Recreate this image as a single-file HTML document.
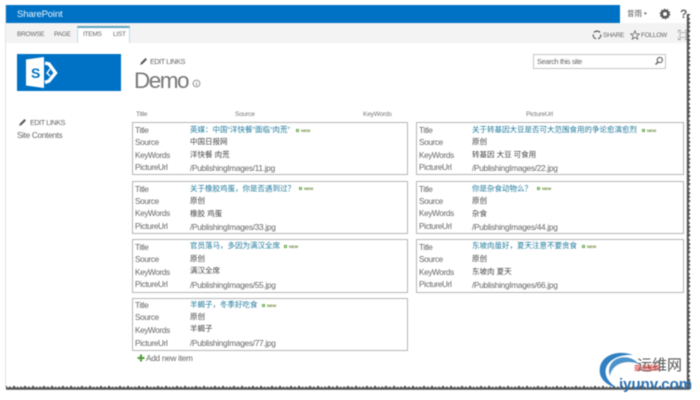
<!DOCTYPE html>
<html><head><meta charset="utf-8">
<style>
html,body{margin:0;padding:0;background:#fff;}
#p{position:relative;width:700px;height:400px;overflow:hidden;background:#fff;font-family:"Liberation Sans","Noto Sans CJK SC",sans-serif;color:#555;filter:blur(.4px);}
.a{position:absolute;white-space:nowrap;}
.c{position:absolute;border:1px solid #b5b5b5;box-sizing:border-box;background:#fff;}
.t{position:absolute;font-size:8.3px;letter-spacing:-.3px;line-height:12px;white-space:nowrap;color:#666;}
.r{font-size:8.2px;letter-spacing:-.35px;}
.v{color:#444;font-size:7.5px;letter-spacing:0;}
.l{color:#1f7a9c;font-size:7.5px;letter-spacing:0;}
.n{position:absolute;width:3px;height:3px;border:1px solid #6aa84f;box-sizing:border-box;}
.m{position:absolute;font-size:4px;line-height:5px;font-weight:bold;color:#6a8a3a;}
.h{position:absolute;font-size:6.6px;letter-spacing:-.2px;color:#777;top:109px;line-height:12px;}
.b{font-size:6.5px;letter-spacing:-.25px;line-height:9px;color:#666;top:30px;}
.e{font-size:7.2px;letter-spacing:-.4px;line-height:10px;color:#666;}
</style></head><body>
<div id="p">
<div class="a" style="left:6px;top:5px;width:614px;height:18px;background:#0072c6;"></div>
<div class="a" style="left:17px;top:8px;font-size:9.6px;letter-spacing:-.2px;line-height:13px;color:#e8f2fa;">SharePoint</div>
<div class="a" style="left:6px;top:23px;width:683px;height:20px;background:#f3f3f3;"></div>
<div class="a" style="left:77px;top:26px;width:53px;height:17px;background:#fff;border:1px solid #c4dbe4;border-top:2px solid #5fa4bd;border-bottom:0;box-sizing:border-box;"></div>
<div class="a b" style="left:17px;">BROWSE</div>
<div class="a b" style="left:54px;">PAGE</div>
<div class="a b" style="left:83px;">ITEMS</div>
<div class="a b" style="left:113px;">LIST</div>

<div class="a" style="left:627px;top:8px;font-size:7.5px;line-height:11px;color:#555;">昔雨 <span style="font-size:5px;vertical-align:1px;">▾</span></div>
<svg class="a" style="left:659px;top:8px;" width="12" height="12" viewBox="0 0 12 12"><circle cx="6" cy="6" r="3.2" fill="none" stroke="#555" stroke-width="2.4"/><circle cx="6" cy="6" r="4.6" fill="none" stroke="#555" stroke-width="1.4" stroke-dasharray="1.6 1.3"/></svg>
<div class="a" style="left:680px;top:7px;font-size:12px;line-height:14px;font-weight:bold;color:#666;">?</div>

<svg class="a" style="left:592px;top:30px;" width="10" height="10" viewBox="0 0 10 10"><path d="M2 2.5A4 4 0 0 1 8 2.5M8.8 4.5A4 4 0 0 1 6 8.8M4 8.8A4 4 0 0 1 1.2 4.5" fill="none" stroke="#555" stroke-width="1.2"/></svg>
<div class="a b" style="left:603px;top:31px;">SHARE</div>
<svg class="a" style="left:630px;top:30px;" width="10" height="10" viewBox="0 0 10 10"><path d="M5 .8L6.2 3.8 9.4 4 6.9 6 7.8 9.2 5 7.4 2.2 9.2 3.1 6 .6 4 3.8 3.8Z" fill="none" stroke="#666" stroke-width=".8"/></svg>
<div class="a b" style="left:641px;top:31px;">FOLLOW</div>
<svg class="a" style="left:678px;top:30px;" width="10" height="10" viewBox="0 0 10 10"><path d="M0 3V.5H3M7 .5H10V3M10 7V9.5H7M3 9.5H0V7" fill="none" stroke="#777" stroke-width=".8"/><rect x="2" y="2.5" width="6" height="5" fill="none" stroke="#999" stroke-width=".7"/></svg>

<div class="a" style="left:17px;top:54px;width:104px;height:37px;background:#0072c6;"></div>
<svg class="a" style="left:17px;top:54px;" width="104" height="37" viewBox="0 0 104 37">
<path d="M9 5.5L27 3V34L9 31.5Z" fill="#fff"/>
<text x="14" y="24" font-family="Liberation Sans" font-size="14" font-weight="bold" fill="#0072c6">S</text>
<path d="M28 9L32 10 38.5 19 32 27 28 28.5" fill="none" stroke="#fff" stroke-width="3.4"/>
<path d="M33 15L30 19 33 22" fill="none" stroke="#fff" stroke-width="1.4"/>
</svg>

<svg class="a" style="left:139px;top:57px;" width="9" height="9" viewBox="0 0 9 9"><path d="M1 8L2 5.5 6.5 1 8 2.5 3.5 7Z" fill="#555"/></svg>
<div class="a e" style="left:150px;top:57px;">EDIT LINKS</div>
<div class="a" style="left:134px;top:68px;font-size:22.5px;line-height:26px;color:#777;letter-spacing:-1.5px;font-weight:normal;">Demo</div>
<svg class="a" style="left:192px;top:79px;" width="9" height="9" viewBox="0 0 9 9"><circle cx="4.5" cy="4.5" r="3.4" fill="none" stroke="#777" stroke-width=".8"/><path d="M4.5 3V3.8M4.5 4.4V6.4" stroke="#777" stroke-width=".9"/></svg>

<div class="a" style="left:533px;top:54px;width:133px;height:15px;border:1px solid #c6c6c6;box-sizing:border-box;background:#fff;"></div>
<div class="a" style="left:537px;top:56px;font-size:7.4px;letter-spacing:-.35px;line-height:11px;color:#666;">Search this site</div>
<svg class="a" style="left:654px;top:56px;" width="10" height="10" viewBox="0 0 10 10"><circle cx="5.8" cy="4" r="2.6" fill="none" stroke="#555" stroke-width="1"/><path d="M4 6L1.6 8.6" stroke="#555" stroke-width="1.3"/></svg>

<svg class="a" style="left:18px;top:118px;" width="9" height="9" viewBox="0 0 9 9"><path d="M1 8L2 5.5 6.5 1 8 2.5 3.5 7Z" fill="#555"/></svg>
<div class="a e" style="left:30px;top:118px;">EDIT LINKS</div>
<div class="a" style="left:17px;top:130px;font-size:8.2px;letter-spacing:-.3px;line-height:12px;color:#666;">Site Contents</div>

<div class="h" style="left:136px;">Title</div>
<div class="h" style="left:235px;">Source</div>
<div class="h" style="left:363px;">KeyWords</div>
<div class="h" style="left:526px;">PictureUrl</div>

<!-- left cards -->
<div class="c" style="left:132px;top:122px;width:276px;height:53px;"></div>
<div class="t r" style="left:135px;top:125px;">Title</div><div class="t r" style="left:135px;top:137px;">Source</div><div class="t r" style="left:135px;top:150px;">KeyWords</div><div class="t r" style="left:135px;top:162px;">PictureUrl</div>
<div class="t l" style="left:190px;top:124px;">英媒：中国“洋快餐”面临“肉荒”</div><div class="n" style="left:296px;top:129px;"></div><div class="m" style="left:301px;top:128px;">NEW</div>
<div class="t v" style="left:190px;top:136px;">中国日报网</div><div class="t v" style="left:190px;top:149px;">洋快餐 肉荒</div><div class="t" style="left:190px;top:162px;">/PublishingImages/11.jpg</div>

<div class="c" style="left:132px;top:181px;width:276px;height:53px;"></div>
<div class="t r" style="left:135px;top:184px;">Title</div><div class="t r" style="left:135px;top:196px;">Source</div><div class="t r" style="left:135px;top:208px;">KeyWords</div><div class="t r" style="left:135px;top:221px;">PictureUrl</div>
<div class="t l" style="left:190px;top:183px;">关于橡胶鸡蛋，你是否遇到过？</div><div class="n" style="left:299px;top:187px;"></div><div class="m" style="left:304px;top:186px;">NEW</div>
<div class="t v" style="left:190px;top:195px;">原创</div><div class="t v" style="left:190px;top:208px;">橡胶 鸡蛋</div><div class="t" style="left:190px;top:221px;">/PublishingImages/33.jpg</div>

<div class="c" style="left:132px;top:239px;width:276px;height:54px;"></div>
<div class="t r" style="left:135px;top:242px;">Title</div><div class="t r" style="left:135px;top:254px;">Source</div><div class="t r" style="left:135px;top:267px;">KeyWords</div><div class="t r" style="left:135px;top:279px;">PictureUrl</div>
<div class="t l" style="left:190px;top:240px;">官员落马，多因为满汉全席</div><div class="n" style="left:284px;top:245px;"></div><div class="m" style="left:289px;top:244px;">NEW</div>
<div class="t v" style="left:190px;top:253px;">原创</div><div class="t v" style="left:190px;top:265px;">满汉全席</div><div class="t" style="left:190px;top:279px;">/PublishingImages/55.jpg</div>

<div class="c" style="left:132px;top:298px;width:276px;height:53px;"></div>
<div class="t r" style="left:135px;top:300px;">Title</div><div class="t r" style="left:135px;top:312px;">Source</div><div class="t r" style="left:135px;top:325px;">KeyWords</div><div class="t r" style="left:135px;top:338px;">PictureUrl</div>
<div class="t l" style="left:190px;top:299px;">羊蝎子，冬季好吃食</div><div class="n" style="left:262px;top:304px;"></div><div class="m" style="left:267px;top:303px;">NEW</div>
<div class="t v" style="left:190px;top:311px;">原创</div><div class="t v" style="left:190px;top:323px;">羊蝎子</div><div class="t" style="left:190px;top:337px;">/PublishingImages/77.jpg</div>

<!-- right cards -->
<div class="c" style="left:416px;top:122px;width:268px;height:53px;"></div>
<div class="t r" style="left:419px;top:125px;">Title</div><div class="t r" style="left:419px;top:137px;">Source</div><div class="t r" style="left:419px;top:150px;">KeyWords</div><div class="t r" style="left:419px;top:162px;">PictureUrl</div>
<div class="t l" style="left:472px;top:124px;">关于转基因大豆是否可大范围食用的争论愈演愈烈</div><div class="n" style="left:642px;top:129px;"></div><div class="m" style="left:647px;top:128px;">NEW</div>
<div class="t v" style="left:472px;top:136px;">原创</div><div class="t v" style="left:472px;top:149px;">转基因 大豆 可食用</div><div class="t" style="left:472px;top:162px;">/PublishingImages/22.jpg</div>

<div class="c" style="left:416px;top:181px;width:268px;height:53px;"></div>
<div class="t r" style="left:419px;top:184px;">Title</div><div class="t r" style="left:419px;top:196px;">Source</div><div class="t r" style="left:419px;top:208px;">KeyWords</div><div class="t r" style="left:419px;top:221px;">PictureUrl</div>
<div class="t l" style="left:472px;top:183px;">你是杂食动物么？</div><div class="n" style="left:537px;top:187px;"></div><div class="m" style="left:542px;top:186px;">NEW</div>
<div class="t v" style="left:472px;top:195px;">原创</div><div class="t v" style="left:472px;top:208px;">杂食</div><div class="t" style="left:472px;top:221px;">/PublishingImages/44.jpg</div>

<div class="c" style="left:416px;top:239px;width:268px;height:54px;"></div>
<div class="t r" style="left:419px;top:242px;">Title</div><div class="t r" style="left:419px;top:254px;">Source</div><div class="t r" style="left:419px;top:267px;">KeyWords</div><div class="t r" style="left:419px;top:279px;">PictureUrl</div>
<div class="t l" style="left:472px;top:240px;">东坡肉虽好，夏天注意不要贪食</div><div class="n" style="left:582px;top:245px;"></div><div class="m" style="left:587px;top:244px;">NEW</div>
<div class="t v" style="left:472px;top:253px;">原创</div><div class="t v" style="left:472px;top:266px;">东坡肉 夏天</div><div class="t" style="left:472px;top:279px;">/PublishingImages/66.jpg</div>

<svg class="a" style="left:137px;top:354px;" width="8" height="8" viewBox="0 0 8 8"><path d="M3 .5H5V3H7.5V5H5V7.5H3V5H.5V3H3Z" fill="#4a9a3a"/></svg>
<div class="a" style="left:146px;top:353px;font-size:8.2px;letter-spacing:-.25px;line-height:12px;color:#666;">Add new item</div>

<!-- torn edges -->
<div class="a" style="left:5px;top:5px;width:1px;height:383px;background:#e2e2e2;"></div>
<svg class="a" style="left:0;top:0;" width="700" height="400" viewBox="0 0 700 400">
<defs>
<filter id="b" x="-5%" y="-5%" width="110%" height="110%"><feGaussianBlur stdDeviation=".35"/></filter>
<pattern id="tv" patternUnits="userSpaceOnUse" x="686" y="0" width="6" height="17"><path d="M2.6 0L4.2 2 2.6 4 4.6 6 2.8 8 4.4 10 2.6 12 4.6 14 2.8 16 2.6 17H.8V0Z" fill="#555"/></pattern>
<pattern id="th" patternUnits="userSpaceOnUse" x="0" y="385" width="19" height="6"><path d="M0 3L2 1.2 4 2.8 6 .4 8 2.8 10 1.2 12 3 14 .2 16 2.8 18 1.2 19 3V4.8H0Z" fill="#555"/></pattern>
</defs>
<rect x="690" y="0" width="10" height="400" fill="#fff"/>
<rect x="0" y="389" width="700" height="11" fill="#fff"/>
<g filter="url(#b)">
<rect x="686" y="14" width="6" height="374" fill="url(#tv)"/>
<rect x="6" y="385" width="684" height="6" fill="url(#th)"/>
</g>
</svg>

<!-- watermark -->
<svg class="a" style="left:595px;top:350px;" width="50" height="44" viewBox="0 0 50 44">
<path d="M38 5C24 0 8 4 5 17C3 27 10 35 22 38C14 33 9 26 11 18C14 9 26 4 38 5Z" fill="#2f7fc1"/>
<path d="M44 14C35 4 21 6 16 14C13 19 14 23 15 26C16 17 27 8 44 14Z" fill="#2f7fc1" opacity=".85"/>
</svg>
<div class="a" style="left:637px;top:356px;font-size:15px;line-height:20px;color:#555;">运维网</div>
<div class="a" style="left:634px;top:364px;font-size:6.5px;line-height:9px;color:#d9534f;font-weight:bold;">亚洲版权</div>
<div class="a" style="left:619px;top:375px;font-size:15px;line-height:20px;font-weight:bold;color:#2a6fb0;">iyunv.com</div>
</div>
</body></html>
